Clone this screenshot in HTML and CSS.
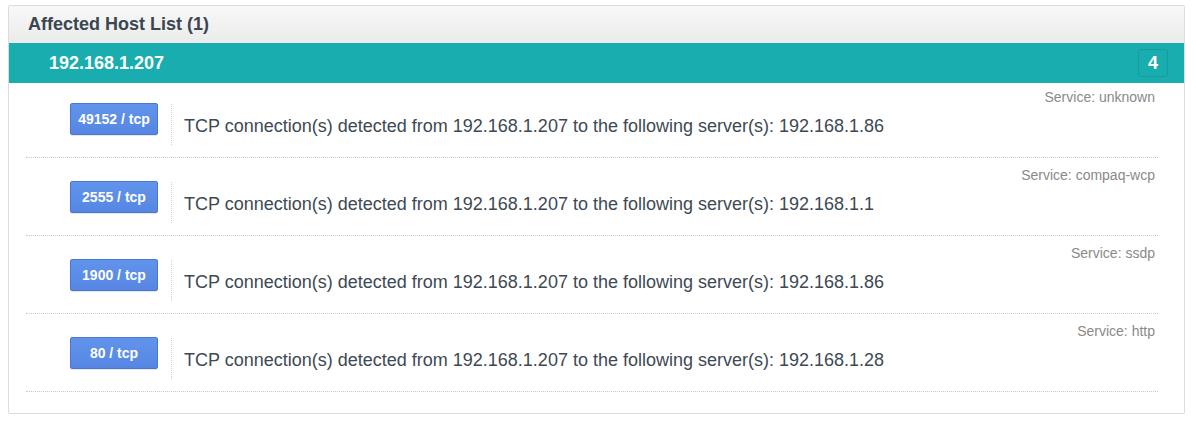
FILE: index.html
```html
<!DOCTYPE html>
<html lang="en">
<head>
    <meta charset="UTF-8">
    <title>Affected Host List</title>
    <link rel="stylesheet" href="styles.css">
</head>
<body>
    <div class="panel">
        <div class="panel-heading">Affected Host List (1)</div>
        <div class="host-bar">
            <span class="host-ip">192.168.1.207</span>
            <span class="host-count">4</span>
        </div>
        <ul class="port-list">
            <li class="port-row">
                <div class="service">Service: unknown</div>
                <div class="port-body">
                    <span class="port">49152 / tcp</span>
                    <p class="desc">TCP connection(s) detected from 192.168.1.207 to the following server(s): 192.168.1.86</p>
                </div>
            </li>
            <li class="port-row">
                <div class="service">Service: compaq-wcp</div>
                <div class="port-body">
                    <span class="port">2555 / tcp</span>
                    <p class="desc">TCP connection(s) detected from 192.168.1.207 to the following server(s): 192.168.1.1</p>
                </div>
            </li>
            <li class="port-row">
                <div class="service">Service: ssdp</div>
                <div class="port-body">
                    <span class="port">1900 / tcp</span>
                    <p class="desc">TCP connection(s) detected from 192.168.1.207 to the following server(s): 192.168.1.86</p>
                </div>
            </li>
            <li class="port-row">
                <div class="service">Service: http</div>
                <div class="port-body">
                    <span class="port">80 / tcp</span>
                    <p class="desc">TCP connection(s) detected from 192.168.1.207 to the following server(s): 192.168.1.28</p>
                </div>
            </li>
        </ul>
    </div>
</body>
</html>
```

FILE: styles.css
```css
body {
    margin: 5px 11px 0 8px;
    font-family: "Liberation Sans", Arial, Helvetica, sans-serif;
    background: #fff;
}
.panel {
    border: 1px solid #dcdcdc;
    border-radius: 2px;
    box-shadow: 1px 1px 2px rgba(0,0,0,0.12);
    padding-bottom: 21px;
}
.panel-heading {
    height: 37px;
    line-height: 37px;
    padding-left: 19px;
    font-size: 18px;
    font-weight: bold;
    color: #3b4650;
    background: linear-gradient(#f8f8f8, #ebebeb);
}
.host-bar {
    display: flex;
    align-items: center;
    justify-content: space-between;
    height: 40px;
    padding: 0 16px 0 40px;
    background-color: #1aadaf;
    color: #fff;
}
.host-ip {
    font-size: 18px;
    font-weight: bold;
}
.host-count {
    width: 28px;
    height: 26px;
    line-height: 26px;
    text-align: center;
    border: 1px solid #159c9e;
    border-radius: 3px;
    font-size: 18px;
    font-weight: bold;
}
.port-list {
    list-style: none;
    margin: 0 26px 0 17px;
    padding: 0;
}
.port-row {
    padding: 8px 0 12px;
    border-bottom: 1px dotted #c8c8c8;
}
.port-row + .port-row {
    padding-top: 11px;
}
.service {
    height: 12px;
    line-height: 12px;
    padding-right: 3px;
    text-align: right;
    font-size: 14px;
    color: #8a8a8a;
}
.port-body {
    display: flex;
    align-items: flex-start;
}
.port {
    box-sizing: border-box;
    width: 88px;
    height: 32px;
    line-height: 30px;
    margin-left: 44px;
    text-align: center;
    font-size: 14px;
    font-weight: bold;
    color: #fff;
    background: linear-gradient(#6194ec, #5686e2);
    border: 1px solid #4a78d0;
    border-radius: 2px;
    box-shadow: 0 1px 1px rgba(0,0,0,0.1);
}
.desc {
    margin: 1px 0 0 13px;
    height: 41px;
    line-height: 44px;
    padding-left: 12px;
    border-left: 1px dotted #cfcfcf;
    font-size: 18px;
    color: #3d4954;
}
```
